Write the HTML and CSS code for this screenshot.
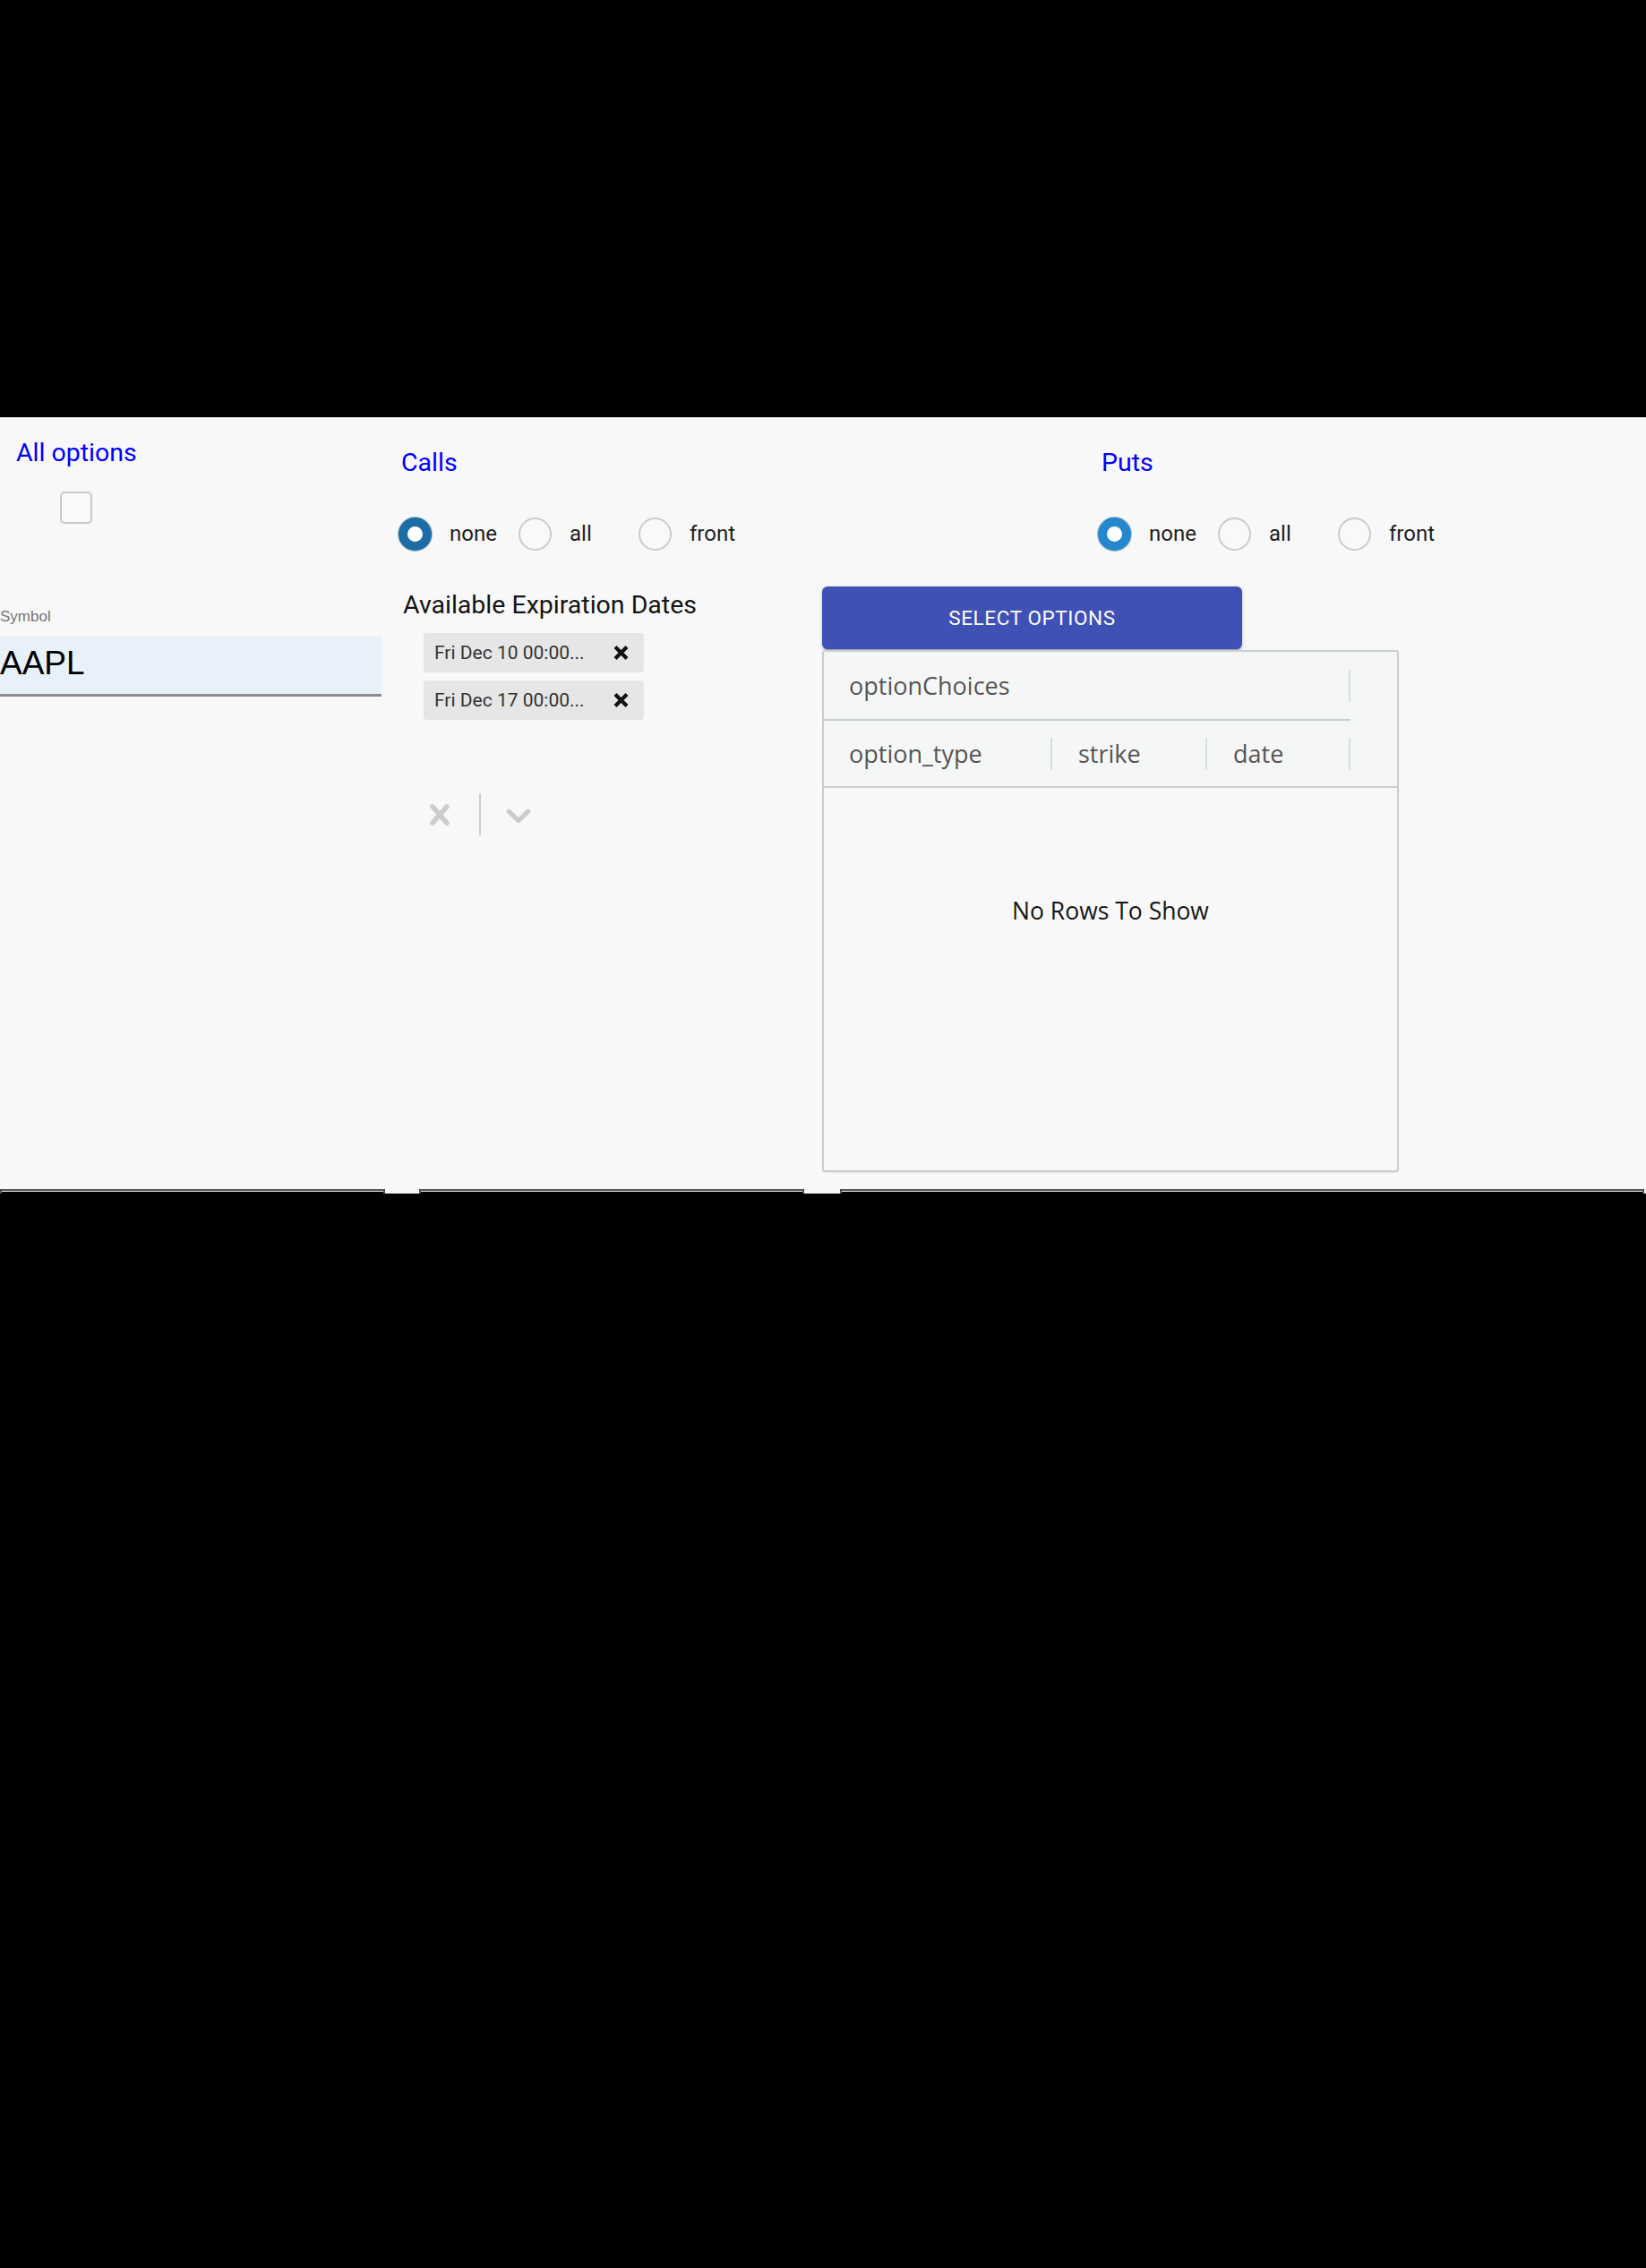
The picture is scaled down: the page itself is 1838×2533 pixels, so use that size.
FILE: index.html
```html
<!DOCTYPE html>
<html lang="en">
<head>
<meta charset="utf-8">
<title>Options</title>
<link rel="stylesheet" href="styles.css">
</head>
<body>
<div class="top-band"></div>
<main class="panel">
  <section class="col col-all">
    <div class="all-toggle">
      <div class="all-label">All options</div>
      <span class="checkbox"></span>
    </div>
    <div class="field">
      <div class="field-label">Symbol</div>
      <div class="field-input">AAPL</div>
    </div>
  </section>

  <section class="col col-calls">
    <h2 class="heading">Calls</h2>
    <div class="radio-row">
      <label class="radio-item"><span class="radio checked calls"></span><span class="radio-label">none</span></label>
      <label class="radio-item"><span class="radio"></span><span class="radio-label">all</span></label>
      <label class="radio-item"><span class="radio"></span><span class="radio-label">front</span></label>
    </div>
    <h3 class="subheading">Available Expiration Dates</h3>
    <div class="select">
      <div class="chips">
        <div class="chip"><span class="chip-label">Fri Dec 10 00:00...</span><svg class="chip-x" viewBox="0 0 17 16"><path d="M2 1.5 L15 14.5 M15 1.5 L2 14.5" /></svg></div>
        <div class="chip"><span class="chip-label">Fri Dec 17 00:00...</span><svg class="chip-x" viewBox="0 0 17 16"><path d="M2 1.5 L15 14.5 M15 1.5 L2 14.5" /></svg></div>
      </div>
      <div class="indicators">
        <svg class="ind" viewBox="0 0 20 20"><path d="M14.348 14.849c-0.469 0.469-1.229 0.469-1.697 0l-2.651-3.030-2.651 3.029c-0.469 0.469-1.229 0.469-1.697 0-0.469-0.469-0.469-1.229 0-1.697l2.758-3.15-2.759-3.152c-0.469-0.469-0.469-1.228 0-1.697s1.228-0.469 1.697 0l2.652 3.031 2.651-3.031c0.469-0.469 1.228-0.469 1.697 0s0.469 1.229 0 1.697l-2.758 3.152 2.758 3.15c0.469 0.469 0.469 1.229 0 1.698z"/></svg>
        <span class="ind-sep"></span>
        <svg class="ind" viewBox="0 0 20 20"><path d="M4.516 7.548c0.436-0.446 1.043-0.481 1.576 0l3.908 3.747 3.908-3.747c0.533-0.481 1.141-0.446 1.574 0 0.436 0.445 0.408 1.197 0 1.615-0.406 0.418-4.695 4.502-4.695 4.502-0.217 0.223-0.502 0.335-0.787 0.335s-0.57-0.112-0.789-0.335c0 0-4.287-4.084-4.695-4.502s-0.436-1.17 0-1.615z"/></svg>
      </div>
    </div>
  </section>

  <section class="col col-puts">
    <div class="puts-head">
      <h2 class="heading puts">Puts</h2>
      <div class="radio-row">
        <label class="radio-item"><span class="radio checked puts"></span><span class="radio-label">none</span></label>
        <label class="radio-item"><span class="radio"></span><span class="radio-label">all</span></label>
        <label class="radio-item"><span class="radio"></span><span class="radio-label">front</span></label>
      </div>
    </div>
    <button class="select-btn" type="button">SELECT OPTIONS</button>
    <div class="grid">
      <div class="grid-header">
        <div class="group-row">
          <div class="group-cell"><span>optionChoices</span><span class="sep"></span></div>
        </div>
        <div class="col-row">
          <div class="col-cell c1"><span>option_type</span><span class="sep"></span></div>
          <div class="col-cell c2"><span>strike</span><span class="sep"></span></div>
          <div class="col-cell c3"><span>date</span><span class="sep"></span></div>
        </div>
      </div>
      <div class="grid-body">No Rows To Show</div>
    </div>
  </section>
</main>
<div class="footer">
  <div class="foot-box b1"></div>
  <div class="foot-gap g1"></div>
  <div class="foot-box b2"></div>
  <div class="foot-gap g2"></div>
  <div class="foot-box b3"></div>
  <div class="foot-gap g3"></div>
</div>
</body>
</html>
```
FILE: styles.css
```css
* { box-sizing: border-box; }

html, body {
  margin: 0;
  padding: 0;
  background: #000;
}

body {
  font-family: Roboto, "Liberation Sans", sans-serif;
}

.top-band { height: 466px; }

.panel {
  display: grid;
  grid-template-columns: 430px 468px 940px;
  height: 862px;
  background: #f8f8f8;
}

/* column 1 */
.col-all { padding-top: 23px; }

.all-toggle {
  display: flex;
  flex-direction: column;
  align-items: center;
  width: max-content;
  margin-left: 18px;
}

.all-label {
  font-size: 28.5px;
  line-height: 34px;
  color: #0000ff;
}

.checkbox {
  display: block;
  width: 36px;
  height: 36px;
  margin-top: 26px;
  border: 2px solid #c9c9c9;
  border-radius: 5px;
  background: #f9f9f9;
}

.field { margin-top: 94px; }

.field-label {
  font-family: "Liberation Sans", Arial, sans-serif;
  font-size: 17px;
  line-height: 20px;
  color: #767676;
}

.field-input {
  margin-top: 12px;
  width: 426px;
  height: 67px;
  padding-top: 7px;
  background: #e8f0f9;
  border-bottom: 3px solid #8c8c93;
  font-family: "Liberation Sans", Arial, sans-serif;
  font-size: 37px;
  line-height: 46px;
  color: #000;
}

/* column 2 */
.col-calls { padding: 34px 0 0 15px; }

.heading {
  margin: 0 0 0 3px;
  font-size: 28.5px;
  line-height: 34px;
  font-weight: 400;
  color: #0000ff;
}

.heading.puts { margin-left: 4px; }

.radio-row {
  display: grid;
  grid-template-columns: repeat(3, 134px);
  margin-top: 44px;
}

.radio-item {
  display: flex;
  align-items: center;
  gap: 20px;
  height: 37px;
}

.radio {
  display: block;
  flex: none;
  width: 37px;
  height: 37px;
  border-radius: 50%;
  border: 2px solid #cbcbcb;
  background: #f9f9f9;
}

.radio.checked {
  border: 10px solid #1c6ca5;
  background: #ffffff;
  box-shadow: 0 0 0 1px rgba(20, 80, 130, 0.35);
}

.radio.checked.puts {
  border-color: #2388cc;
}

.radio-label {
  font-size: 24px;
  line-height: 37px;
  color: #1e1e1e;
}

.subheading {
  margin: 44px 0 0 5px;
  font-size: 28.5px;
  line-height: 34px;
  font-weight: 400;
  color: #141414;
}

.chips {
  margin: 14px 0 0 28px;
  display: flex;
  flex-direction: column;
  gap: 9px;
}

.chip {
  width: 246px;
  height: 44px;
  display: flex;
  align-items: center;
  padding-left: 12px;
  background: #e6e6e6;
  border-radius: 4px;
}

.chip-label {
  flex: 1;
  font-size: 21px;
  color: #333;
  white-space: nowrap;
}

.chip-x {
  width: 17px;
  height: 16px;
  margin-right: 17px;
  stroke: #111;
  stroke-width: 4.2;
  fill: none;
}

.indicators {
  display: flex;
  align-items: center;
  height: 47px;
  margin-top: 82px;
  padding-left: 23px;
}

.ind {
  width: 46px;
  height: 46px;
  fill: #cccccc;
  flex: none;
}

.ind-sep {
  display: block;
  width: 2px;
  height: 47px;
  background: #cccccc;
  margin: 0 18.5px 0 21px;
}

/* column 3 */
.col-puts { padding: 34px 0 0 20px; }

.puts-head { margin-left: 308px; }

.select-btn {
  display: block;
  margin-top: 40px;
  width: 469px;
  height: 70px;
  border: none;
  border-radius: 6px;
  background: #3f51b5;
  color: #ffffff;
  font-family: Roboto, sans-serif;
  font-size: 22.5px;
  letter-spacing: 0.6px;
  font-weight: 400;
  box-shadow: 0 3px 1px -2px rgba(0,0,0,0.2), 0 2px 2px 0 rgba(0,0,0,0.14), 0 1px 5px 0 rgba(0,0,0,0.12);
}

.grid {
  margin-top: 1px;
  width: 644px;
  height: 583px;
  border: 2px solid #c9ced1;
  border-radius: 3px;
  display: flex;
  flex-direction: column;
  font-family: "Open Sans", "Noto Sans", sans-serif;
  box-shadow: 0 1px 1px rgba(0,0,0,0.08);
}

.grid-header {
  background: #f5f7f7;
  border-bottom: 2px solid #c9ced1;
  color: #555;
  font-size: 27px;
}

.group-row {
  height: 77px;
  display: flex;
}

.group-cell {
  width: 588px;
  display: flex;
  align-items: center;
  justify-content: space-between;
  padding-left: 28px;
  border-bottom: 2px solid #c9ced1;
}

.col-row {
  height: 73px;
  display: flex;
}

.col-cell {
  display: flex;
  align-items: center;
  justify-content: space-between;
  padding-left: 29px;
}

.col-cell.c1 { width: 255px; padding-left: 28px; }
.col-cell.c2 { width: 173px; }
.col-cell.c3 { width: 160px; }

.sep {
  display: block;
  width: 2px;
  height: 36px;
  background: #dadddf;
}

.grid-body {
  flex: 1;
  padding-top: 117px;
  text-align: center;
  font-size: 26.5px;
  line-height: 40px;
  color: #151515;
}

/* footer strip */
.footer {
  display: flex;
  align-items: flex-start;
  height: 40px;
}

.foot-box {
  height: 5px;
  background: #000;
  border: 2px solid #555;
  border-bottom: none;
  border-radius: 2px 2px 0 0;
  box-shadow: inset 0 1px 0 #e6e6e6;
}

.b1 { width: 430px; }
.b2 { width: 430px; }
.b3 { width: 898px; }

.foot-gap {
  height: 5px;
  background: #f8f8f8;
}

.g1 { width: 38px; }
.g2 { width: 40px; }
.g3 { width: 2px; }
```
